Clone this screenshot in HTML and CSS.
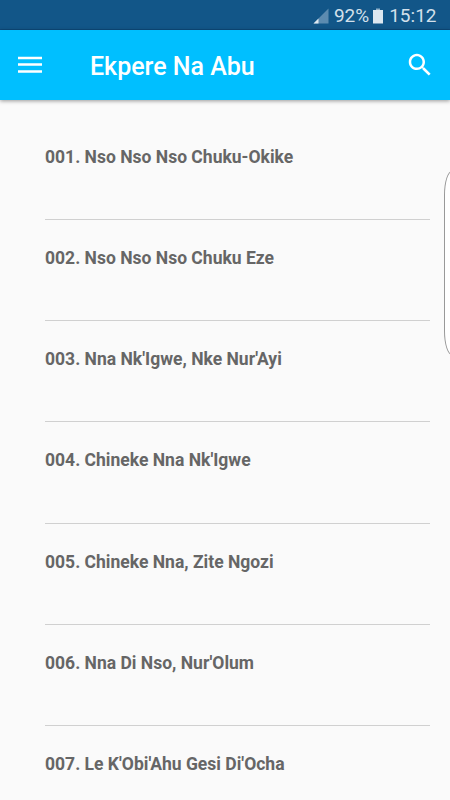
FILE: index.html
```html
<!DOCTYPE html>
<html lang="ig">
<head>
    <meta charset="UTF-8">
    <meta name="viewport" content="width=device-width, initial-scale=1.0">
    <title>Ekpere Na Abu</title>
    <link rel="stylesheet" href="styles.css">
</head>
<body>
    <div class="status-bar">
        <svg class="signal" viewBox="0 0 16 16">
            <path d="M15.5 0.5V15.5H0.5z" fill="#5c8bb0"/>
            <path d="M5.5 10.5V15.5H0.5z" fill="#dce7f0"/>
        </svg>
        <span class="percent">92%</span>
        <svg class="battery" viewBox="0 0 10 16">
            <path d="M3 0.5h4v1.5H3z" fill="#8fb0c9"/>
            <path d="M0 2h10v13.5H0z" fill="#dce7f0"/>
        </svg>
        <span class="clock">15:12</span>
    </div>

    <header class="toolbar">
        <button class="icon-button" aria-label="Menu">
            <svg width="30" height="30" viewBox="0 0 30 30">
                <path d="M3 6.8h24v2.5H3zM3 13.3h24v2.5H3zM3 20.2h24v2.5H3z"/>
            </svg>
        </button>
        <h1 class="title">Ekpere Na Abu</h1>
        <button class="icon-button" aria-label="Search">
            <svg width="30" height="30" viewBox="0 0 24 24">
                <path d="M15.5 14h-.79l-.28-.27C15.41 12.59 16 11.11 16 9.5 16 5.91 13.09 3 9.5 3S3 5.91 3 9.5 5.91 16 9.5 16c1.61 0 3.09-.59 4.23-1.57l.27.28v.79l5 4.99L20.49 19l-4.99-5zm-6 0C7.01 14 5 11.99 5 9.5S7.01 5 9.5 5 14 7.01 14 9.5 11.99 14 9.5 14z"/>
            </svg>
        </button>
    </header>

    <ul class="song-list">
        <li class="song-item">001. Nso Nso Nso Chuku-Okike</li>
        <li class="song-item">002. Nso Nso Nso Chuku Eze</li>
        <li class="song-item">003. Nna Nk'Igwe, Nke Nur'Ayi</li>
        <li class="song-item">004. Chineke Nna Nk'Igwe</li>
        <li class="song-item">005. Chineke Nna, Zite Ngozi</li>
        <li class="song-item">006. Nna Di Nso, Nur'Olum</li>
        <li class="song-item">007. Le K'Obi'Ahu Gesi Di'Ocha</li>
    </ul>

    <div class="edge-handle"></div>
</body>
</html>
```
FILE: styles.css
```css
* {
    box-sizing: border-box;
}

body {
    margin: 0;
    height: 800px;
    overflow: hidden;
    position: relative;
    background-color: #fafafa;
    font-family: Roboto, sans-serif;
    color: #666;
}

.status-bar {
    height: 30px;
    padding: 2px 13.5px 0 0;
    display: flex;
    justify-content: flex-end;
    align-items: center;
    background-color: #125688;
    border-bottom: 1px solid #0d4a7c;
    color: #d3e0eb;
    font-size: 19px;
}

.signal {
    width: 16px;
    height: 16px;
    margin-right: 5px;
}

.battery {
    width: 10px;
    height: 16px;
    margin: 0 6px 0 4px;
}

.toolbar {
    height: 70px;
    padding: 0 15px;
    display: flex;
    align-items: center;
    background-color: #00bfff;
    color: #fff;
    box-shadow: 0 1px 4px rgba(0, 0, 0, 0.4);
}

.icon-button {
    width: 30px;
    height: 30px;
    padding: 0;
    border: none;
    background: none;
    color: inherit;
}

.icon-button svg {
    display: block;
    fill: currentColor;
}

.title {
    flex: 1;
    margin: 2px 0 0 45px;
    font-size: 25px;
    font-weight: 500;
}

.song-list {
    list-style: none;
    margin: 0;
    padding: 18.6px 20px 0 45px;
}

.song-item {
    height: 101.25px;
    padding-top: 28px;
    border-bottom: 1px solid #d0d0d0;
    font-size: 17.52px;
    font-weight: bold;
    line-height: 21px;
}

/* tab of the side panel, half off screen */
.edge-handle {
    position: absolute;
    top: 171px;
    right: -10px;
    width: 16px;
    height: 184px;
    border: 1px solid #999;
    border-radius: 8px / 24px;
    background-color: #fff;
}
```
